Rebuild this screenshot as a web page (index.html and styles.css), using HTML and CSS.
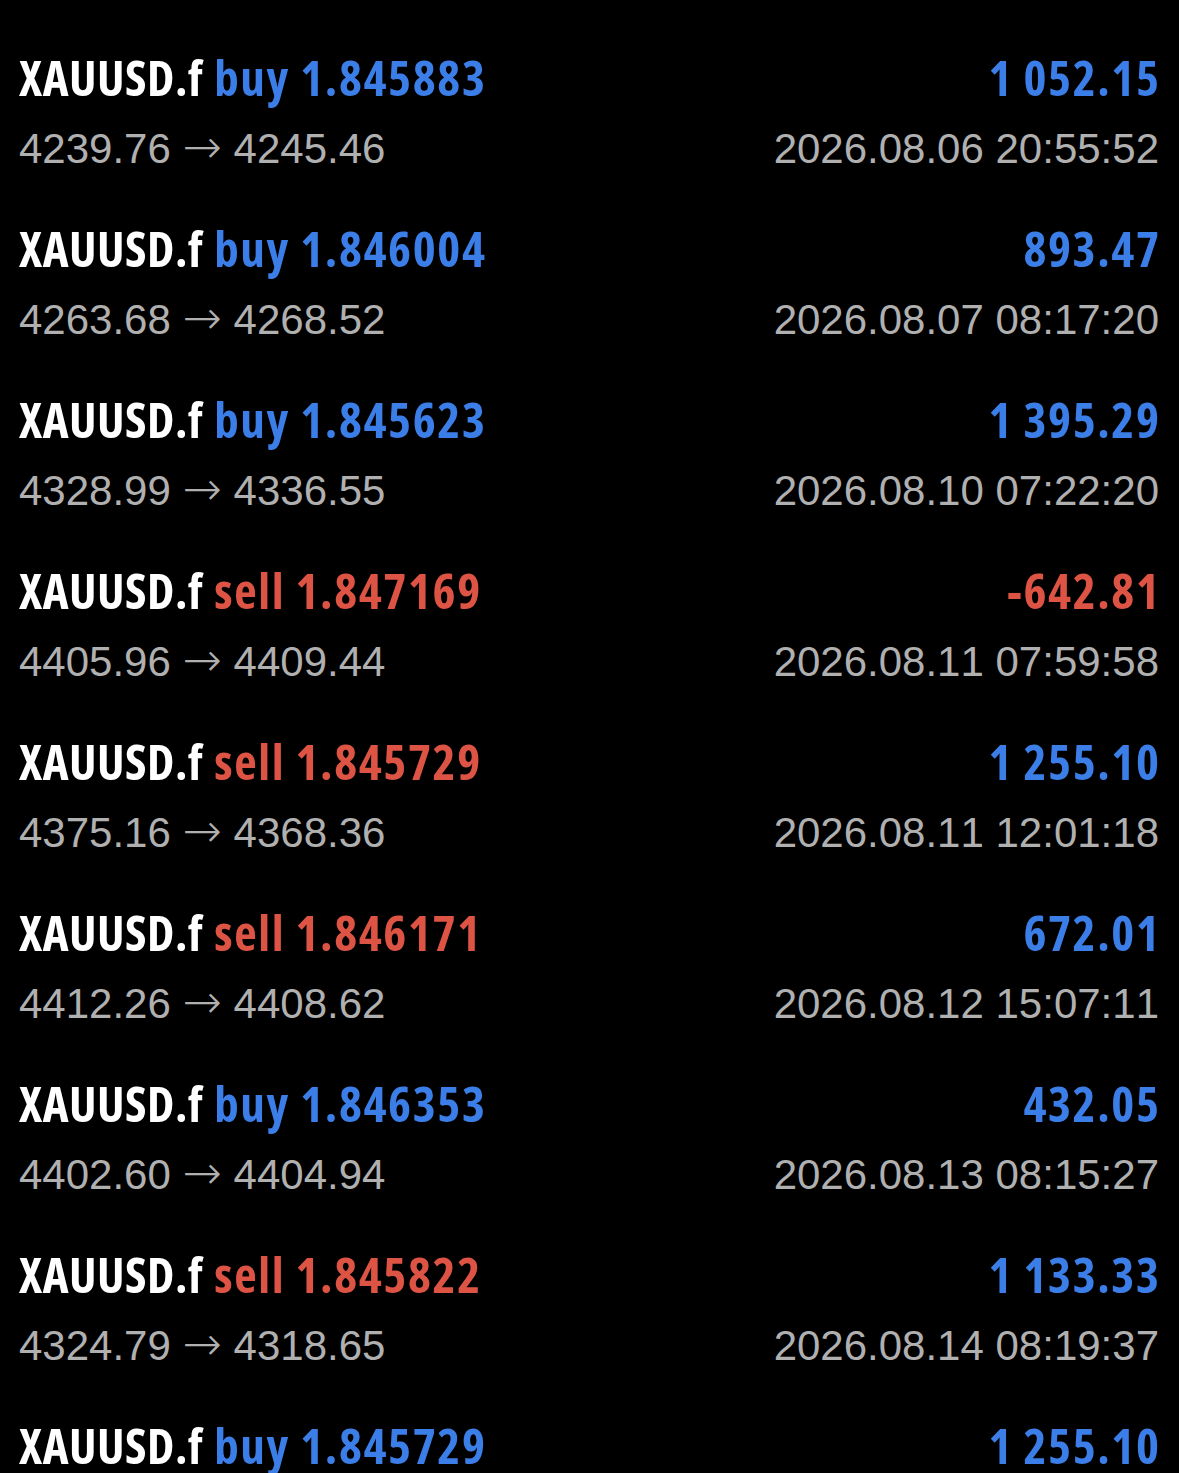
FILE: index.html
```html
<!DOCTYPE html>
<html lang="en">
<head>
  <meta charset="UTF-8" />
  <title>History</title>
  <meta name="viewport" content="width=device-width, initial-scale=1">
  <link rel="stylesheet" href="styles.css">
</head>
<body>
  <div class="list" id="deals">
    <!-- Filled from deals below -->
  </div>

  <script>
    const deals = [
      ['buy', '1.845883', '1 052.15', '4239.76', '4245.46', '2026.08.06 20:55:52'],
      ['buy', '1.846004', '893.47', '4263.68', '4268.52', '2026.08.07 08:17:20'],
      ['buy', '1.845623', '1 395.29', '4328.99', '4336.55', '2026.08.10 07:22:20'],
      ['sell', '1.847169', '-642.81', '4405.96', '4409.44', '2026.08.11 07:59:58'],
      ['sell', '1.845729', '1 255.10', '4375.16', '4368.36', '2026.08.11 12:01:18'],
      ['sell', '1.846171', '672.01', '4412.26', '4408.62', '2026.08.12 15:07:11'],
      ['buy', '1.846353', '432.05', '4402.60', '4404.94', '2026.08.13 08:15:27'],
      ['sell', '1.845822', '1 133.33', '4324.79', '4318.65', '2026.08.14 08:19:37'],
      ['buy', '1.845729', '1 255.10', '4368.20', '4374.98', '2026.08.14 16:40:02']
    ];
    const list = document.getElementById('deals');
    deals.forEach(([side, vol, profit, open, close, time]) => {
      const row = document.createElement('div');
      row.className = 'deal';
      row.innerHTML = `
        <div class="line top">
          <span class="sym">XAUUSD.f <span class="${side}">${side} ${vol}</span></span>
          <span class="profit ${profit.startsWith('-') ? 'loss' : 'gain'}">${profit}</span>
        </div>
        <div class="line sub">
          <span>${open} <span class="arrow">→</span> ${close}</span>
          <span>${time}</span>
        </div>
      `;
      list.appendChild(row);
    });
  </script>
</body>
</html>
```
FILE: styles.css
```css
body {
  margin: 0;
  background: #000;
  color: #fff;
  padding: 47px 20px 0 19px;
  height: 1473px;
  overflow: hidden;
  box-sizing: border-box;
}

.deal {
  padding-bottom: 27px;
}

.line {
  display: flex;
  justify-content: space-between;
  white-space: nowrap;
}

.top {
  font-family: 'Open Sans', sans-serif;
  font-stretch: 78%;
  font-weight: 700;
  font-size: 49px;
  line-height: 60px;
  letter-spacing: 0.5px;
  word-spacing: 2px;
}

.buy, .sell, .profit {
  letter-spacing: 1.6px;
  word-spacing: 0;
}

.profit {
  margin-right: -1.5px;
}

.sub {
  font-family: 'Liberation Sans', Arial, sans-serif;
  font-size: 42px;
  line-height: 84px;
  color: #b0b0b0;
  font-kerning: none;
  font-variant-numeric: tabular-nums;
}

.arrow {
  font-family: 'DejaVu Sans', sans-serif;
  font-weight: 200;
  font-size: 47px;
  line-height: 0;
}

.buy, .gain {
  color: #3b7ee8;
}

.sell, .loss {
  color: #dd5444;
}
```
